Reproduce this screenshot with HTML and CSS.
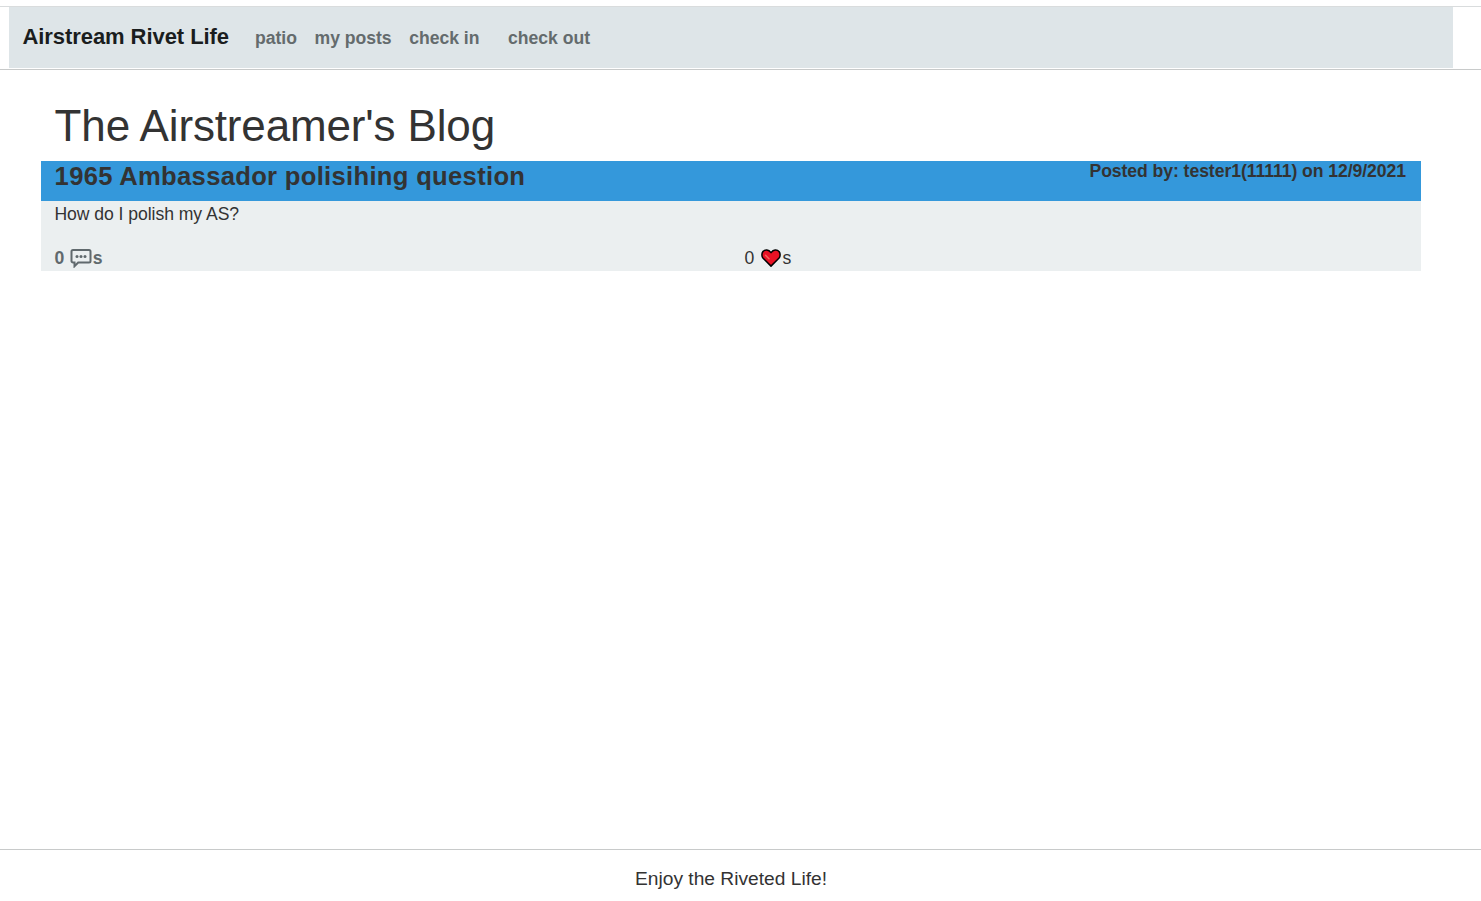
FILE: index.html
```html
<!DOCTYPE html>
<html lang="en">
<head>
<meta charset="utf-8">
<title>Airstream Rivet Life</title>
<link rel="stylesheet" href="styles.css">
</head>
<body>
<header class="site-header">
  <nav class="navbar">
    <a class="brand">Airstream Rivet Life</a>
    <a class="nav-link">patio</a>
    <a class="nav-link">my posts</a>
    <a class="nav-link">check in</a>
    <a class="nav-link nav-last">check out</a>
  </nav>
</header>
<main class="content">
  <h1 class="page-title">The Airstreamer's Blog</h1>
  <article class="post">
    <div class="post-head">
      <h2 class="post-title">1965 Ambassador polisihing question</h2>
      <span class="post-meta">Posted by: tester1(11111) on 12/9/2021</span>
    </div>
    <p class="post-text">How do I polish my AS?</p>
    <div class="post-stats">
      <a class="stat comments"><span>0</span><svg class="icon comment-icon" viewBox="0 0 22 20"><path d="M3 2h16a1.5 1.5 0 0 1 1.5 1.5V13a1.5 1.5 0 0 1-1.5 1.5H8.200L4.500 18.200v-3.700H3A1.500 1.500 0 0 1 1.500 13V3.500A1.500 1.500 0 0 1 3 2z" fill="none" stroke="#60696d" stroke-width="2"/><g fill="#60696d"><circle cx="7" cy="8.500" r="1.500"/><circle cx="11" cy="8.500" r="1.500"/><circle cx="15" cy="8.500" r="1.500"/></g></svg><span>s</span></a>
      <span class="stat"><span>0</span><svg class="icon heart-icon" viewBox="0 0 20 18"><path d="M10 17.100 1.900 9C.6 7.500.6 4.400 1.800 2.800 4 .2 7.600.5 10 3.600 12.400.5 16 .2 18.200 2.800c1.200 1.600 1.200 4.700-.1 6.200z" fill="#e81224" stroke="#000" stroke-width="1.500" stroke-linejoin="round"/><path d="M4.500 6.200 8 9.700" stroke="#f4655c" stroke-width="1.500" stroke-linecap="round"/></svg><span>s</span></span>
    </div>
  </article>
</main>
<footer class="site-footer">Enjoy the Riveted Life!</footer>
</body>
</html>
```
FILE: styles.css
```css
* { box-sizing: border-box; }
body {
  margin: 0;
  height: 901px;
  padding-top: 6px;
  display: flex;
  flex-direction: column;
  background: #fff;
  color: #333;
  font: 17.6px/22px "Liberation Sans", Arial, sans-serif;
}
.site-header {
  height: 64px;
  border-top: 1px solid #d9dcdd;
  border-bottom: 1px solid #c8caca;
  padding: 0 28px 0 9px;
}
.navbar {
  height: 61px;
  background: #dee5e8;
  padding: 0 14px 0 13.4px;
  display: flex;
  align-items: center;
  font-weight: bold;
}
.brand { width: 232.6px; font-size: 22px; letter-spacing: -0.06px; color: #1a1d1e; padding-bottom: 2px; }
.nav-link { color: #646b6d; margin-right: 17.6px; letter-spacing: -0.02px; }
.nav-last { margin-left: 11px; }
.content { flex: 1; padding: 28px 60px 0 41px; }
.page-title {
  margin: 0;
  padding-left: 13.6px;
  height: 63px;
  line-height: 56px;
  font-size: 44px;
  letter-spacing: -0.15px;
  font-weight: normal;
}
.post { height: 110px; background: #ebeff0; }
.post-head {
  height: 40px;
  padding: 0 15px 0 13.6px;
  background: #3498db;
  display: flex;
  justify-content: space-between;
}
.post-title { margin: 0; font-size: 25.6px; line-height: 30px; letter-spacing: 0.31px; }
.post-meta { font-weight: bold; line-height: 20px; letter-spacing: -0.06px; }
.post-text { margin: 0; padding: 2px 13.4px 0; height: 46px; letter-spacing: -0.05px; }
.post-stats { display: grid; grid-template-columns: 1fr 1fr; }
.stat { display: flex; align-items: center; height: 22px; padding-left: 13.4px; line-height: 22px; }
.comments { color: #60696d; font-weight: bold; }
.icon { flex: none; }
.comment-icon { width: 22px; height: 20px; margin: 0 1px 1px 5.6px; }
.heart-icon { width: 20px; height: 18px; margin: 0 1.8px 0 6.6px; }
.site-footer {
  height: 52px;
  border-top: 1px solid #c8caca;
  padding: 18px 19px 0 0;
  text-align: center;
  font-size: 19.2px;
}
```
